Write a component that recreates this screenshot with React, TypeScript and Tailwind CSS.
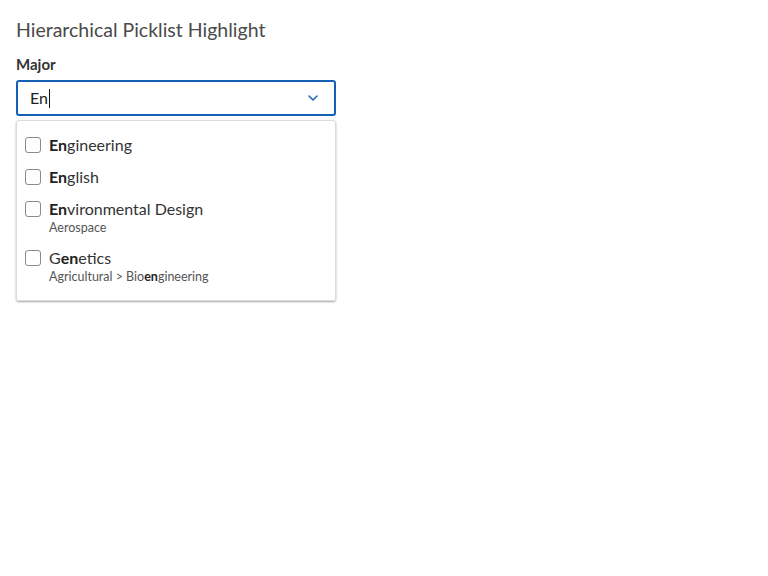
import { ChevronDown } from 'lucide-react';

type Item = { pre: string; hit: string; post: string; sub?: { pre: string; hit?: string; post?: string } };

const items: Item[] = [
  { pre: '', hit: 'En', post: 'gineering' },
  { pre: '', hit: 'En', post: 'glish' },
  { pre: '', hit: 'En', post: 'vironmental Design', sub: { pre: 'Aerospace' } },
  { pre: 'G', hit: 'en', post: 'etics', sub: { pre: 'Agricultural > Bio', hit: 'en', post: 'gineering' } },
];

export default function App() {
  return (
    <div className="min-h-[576px] bg-white px-4 pt-[17px] font-['Lato','Liberation_Sans',sans-serif] text-[#333]">
      <h1 className="text-[19.5px] leading-[26px] text-[#4a4a4a]">Hierarchical Picklist Highlight</h1>

      <label className="mt-[11px] block text-[15px] font-bold leading-5 text-[#333]">Major</label>

      <div className="mt-[6px] w-[320px]">
        {/* Input */}
        <div className="flex h-9 items-center rounded-[3px] border-2 border-[#1660b8] pl-3 pr-[13px]">
          <span className="text-[16px] text-[#222]">En</span>
          <span className="ml-px h-[19px] w-px bg-[#111]" />
          <ChevronDown size={16} strokeWidth={2.2} className="ml-auto text-[#1660b8]" />
        </div>

        {/* Dropdown */}
        <ul className="mt-1 rounded-[3px] border border-[#dcdcdc] pb-[9px] pt-2 shadow-[0_1px_2px_rgba(0,0,0,0.35)]">
          {items.map((it, i) => (
            <li key={i} className="flex items-start gap-2 px-2 py-[3px]">
              <span className="mt-[5px] h-4 w-4 shrink-0 rounded-[3px] border border-[#8a8a8a] bg-white" />
              <div>
                <div className="text-[16px] leading-[26px] text-[#333]">
                  {it.pre}
                  <b className="font-bold text-[#222]">{it.hit}</b>
                  {it.post}
                </div>
                {it.sub && (
                  <div className="-mt-[2px] mb-[3px] text-[12.5px] leading-[16px] text-[#555]">
                    {it.sub.pre}
                    {it.sub.hit && <b className="font-bold text-[#222]">{it.sub.hit}</b>}
                    {it.sub.post}
                  </div>
                )}
              </div>
            </li>
          ))}
        </ul>
      </div>
    </div>
  );
}
